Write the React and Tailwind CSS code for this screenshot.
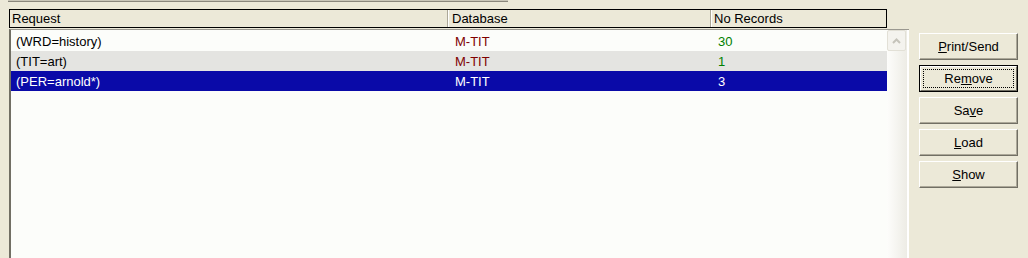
import React from "react";

const rows = [
  { req: "(WRD=history)", db: "M-TIT", n: "30", bg: "bg-[#FCFDFA]", sel: false },
  { req: "(TIT=art)", db: "M-TIT", n: "1", bg: "bg-[#E4E4E1]", sel: false },
  { req: "(PER=arnold*)", db: "M-TIT", n: "3", bg: "bg-[#0A0AA8]", sel: true },
];

function Btn({ children, def }) {
  if (def) {
    return (
      <div className="w-[99px] h-[27px] border border-black bg-[#ECE9D8]">
        <div className="w-full h-full border-t border-l border-t-white border-l-white border-r border-b border-r-[#716F64] border-b-[#716F64] flex items-center justify-center p-[2px]">
          <div className="w-full h-full border border-dotted border-black flex items-center justify-center leading-none">
            {children}
          </div>
        </div>
      </div>
    );
  }
  return (
    <div className="w-[99px] h-[27px] bg-[#ECE9D8] border-t border-l border-t-white border-l-white border-r border-b border-r-[#716F64] border-b-[#716F64] shadow-[inset_-1px_-1px_0_#ACA899] flex items-center justify-center leading-none">
      {children}
    </div>
  );
}

export default function App() {
  return (
    <div className="w-[1028px] h-[258px] bg-[#ECE9D8] overflow-hidden text-[13px] text-black font-['Liberation_Sans',Arial,sans-serif]">
      <div className="h-[9px] pl-[8px]">
        <div className="w-[500px] h-[2px] bg-[#C9C6B8] border-b border-[#8A877C]" />
      </div>
      <div className="flex">
        <div className="w-[909px] pl-[9px] flex flex-col">
          <div className="w-[878px] h-[19px] border border-black flex bg-[#ECE9D8] leading-none">
            <div className="w-[438px] border-r border-[#ACA899] pl-[2px] flex items-center">Request</div>
            <div className="w-[263px] border-l border-white border-r border-r-[#ACA899] pl-[3px] flex items-center">Database</div>
            <div className="flex-1 border-l border-white pl-[2px] flex items-center">No Records</div>
          </div>
          <div className="mt-[1px] w-[900px] h-[240px] border-t border-[#9A9890] border-l-2 border-l-[#716F64] flex bg-[#FCFDFA]">
            <div className="w-[876px] pt-[1px] flex flex-col">
              {rows.map((r, i) => (
                <div key={i} className={`h-[20px] flex items-center leading-none ${r.bg}`}>
                  <div className={`w-[436px] pl-[5px] ${r.sel ? "text-white" : "text-black"}`}>{r.req}</div>
                  <div className={`w-[263px] pl-[8px] ${r.sel ? "text-white" : "text-[#800000]"}`}>{r.db}</div>
                  <div className={`flex-1 pl-[8px] ${r.sel ? "text-white" : "text-[#008000]"}`}>{r.n}</div>
                </div>
              ))}
            </div>
            <div className="w-[20px] bg-gradient-to-r from-[#FDFDFB] to-[#EDECE5] flex flex-col">
              <div className="w-[19px] h-[21px] rounded-[2px] border border-[#E2E0D6] bg-[#F4F3EE] flex items-center justify-center">
                <svg width="9" height="6" viewBox="0 0 9 6">
                  <path d="M1 5 L4.5 1.5 L8 5" fill="none" stroke="#C5C3BA" strokeWidth="2" />
                </svg>
              </div>
            </div>
            <div className="w-[2px] bg-white" />
          </div>
        </div>
        <div className="ml-[10px] mt-[24px] flex flex-col gap-[5px]">
          <Btn><span><span className="underline">P</span>rint/Send</span></Btn>
          <Btn def><span>Re<span className="underline">m</span>ove</span></Btn>
          <Btn><span>Sa<span className="underline">v</span>e</span></Btn>
          <Btn><span><span className="underline">L</span>oad</span></Btn>
          <Btn><span><span className="underline">S</span>how</span></Btn>
        </div>
      </div>
    </div>
  );
}
